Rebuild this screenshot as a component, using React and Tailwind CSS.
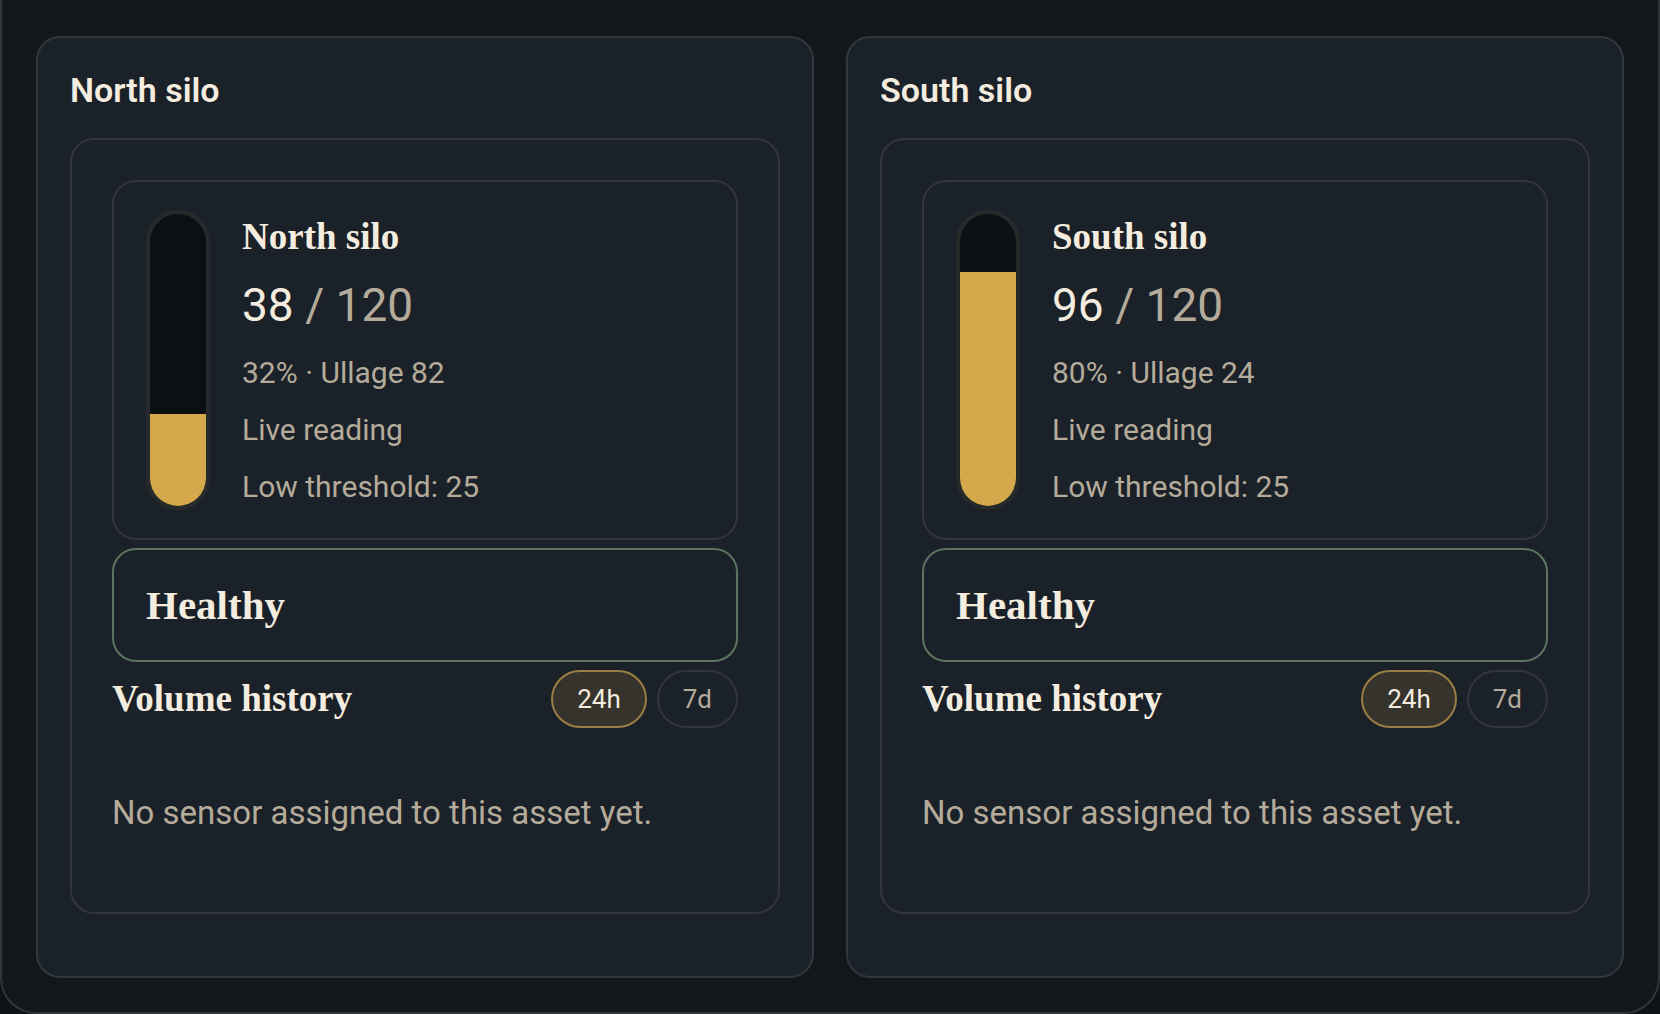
import React, { useState } from "react";

const silos = [
  { id: "north", name: "North silo", level: 38, capacity: 120, threshold: 25 },
  { id: "south", name: "South silo", level: 96, capacity: 120, threshold: 25 },
];

const ranges = ["24h", "7d"];

function Tank({ percent }) {
  return (
    <div className="flex h-[300px] w-16 shrink-0 flex-col justify-end overflow-hidden rounded-full border-4 border-[#272a2b] bg-[#0c1012]">
      <div className="bg-[#d4a84b]" style={{ height: `${percent}%` }} />
    </div>
  );
}

function LevelCard({ silo }) {
  const percent = (silo.level / silo.capacity) * 100;

  return (
    <div className="flex gap-8 rounded-3xl border-2 border-[#30363a] px-8 py-7">
      <Tank percent={percent} />
      <div className="flex flex-col pt-1 text-[30px] text-[#b5ab9a]">
        <h3 className="font-['Liberation_Serif',serif] text-[37px] leading-[46px] font-bold text-[#f3ecdf]">{silo.name}</h3>
        <p className="mt-3 text-[46px] leading-[66px]">
          <span className="text-[#f3ecdf]">{silo.level}</span> / {silo.capacity}
        </p>
        <div className="mt-3 flex flex-col gap-[11px] leading-[46px]">
          <p>
            {Math.round(percent)}% · Ullage {silo.capacity - silo.level}
          </p>
          <p>Live reading</p>
          <p>Low threshold: {silo.threshold}</p>
        </div>
      </div>
    </div>
  );
}

function VolumeHistory() {
  const [range, setRange] = useState("24h");

  return (
    <section>
      <div className="flex items-center justify-between">
        <h3 className="font-['Liberation_Serif',serif] text-[37px] leading-[46px] font-bold text-[#f3ecdf]">Volume history</h3>
        <div className="flex gap-[10px]">
          {ranges.map((r) => (
            <button
              key={r}
              type="button"
              aria-pressed={range === r}
              onClick={() => setRange(r)}
              className={
                range === r
                  ? "h-[58px] rounded-full border-2 border-[#9a7d42] bg-[#35332c] px-6 text-[26px] text-[#f3ecdf]"
                  : "h-[58px] rounded-full border-2 border-[#30363a] px-6 text-[26px] text-[#b5ab9a]"
              }
            >
              {r}
            </button>
          ))}
        </div>
      </div>
      <p className="flex min-h-36 items-center pt-[26px] text-[33px] leading-[50px] text-[#b5ab9a]">
        No sensor assigned to this asset yet.
      </p>
    </section>
  );
}

function SiloCard({ silo }) {
  return (
    <article className="rounded-3xl border-2 border-[#30383c] bg-[#1b2129] px-8 pt-[30px] pb-[62px]">
      <h2 className="mb-[26px] text-[34px] leading-[44px] font-semibold text-[#f3ecdf]">{silo.name}</h2>
      <div className="flex flex-col gap-2 rounded-3xl border-2 border-[#30363a] p-10">
        <LevelCard silo={silo} />
        <div className="rounded-3xl border-2 border-[#5a755e] px-8 py-7">
          <p className="font-['Liberation_Serif',serif] text-[41px] leading-[54px] font-bold text-[#f3ecdf]">Healthy</p>
        </div>
        <VolumeHistory />
      </div>
    </article>
  );
}

export default function App() {
  return (
    <div className="min-h-screen bg-[#0f1315] font-['Roboto',sans-serif]">
      <main className="grid min-h-screen grid-cols-2 items-start gap-8 rounded-b-[36px] border-x-2 border-b-2 border-[#30363a] bg-[#13161a] px-[34px] pt-9 pb-[34px]">
        {silos.map((silo) => (
          <SiloCard key={silo.id} silo={silo} />
        ))}
      </main>
    </div>
  );
}
